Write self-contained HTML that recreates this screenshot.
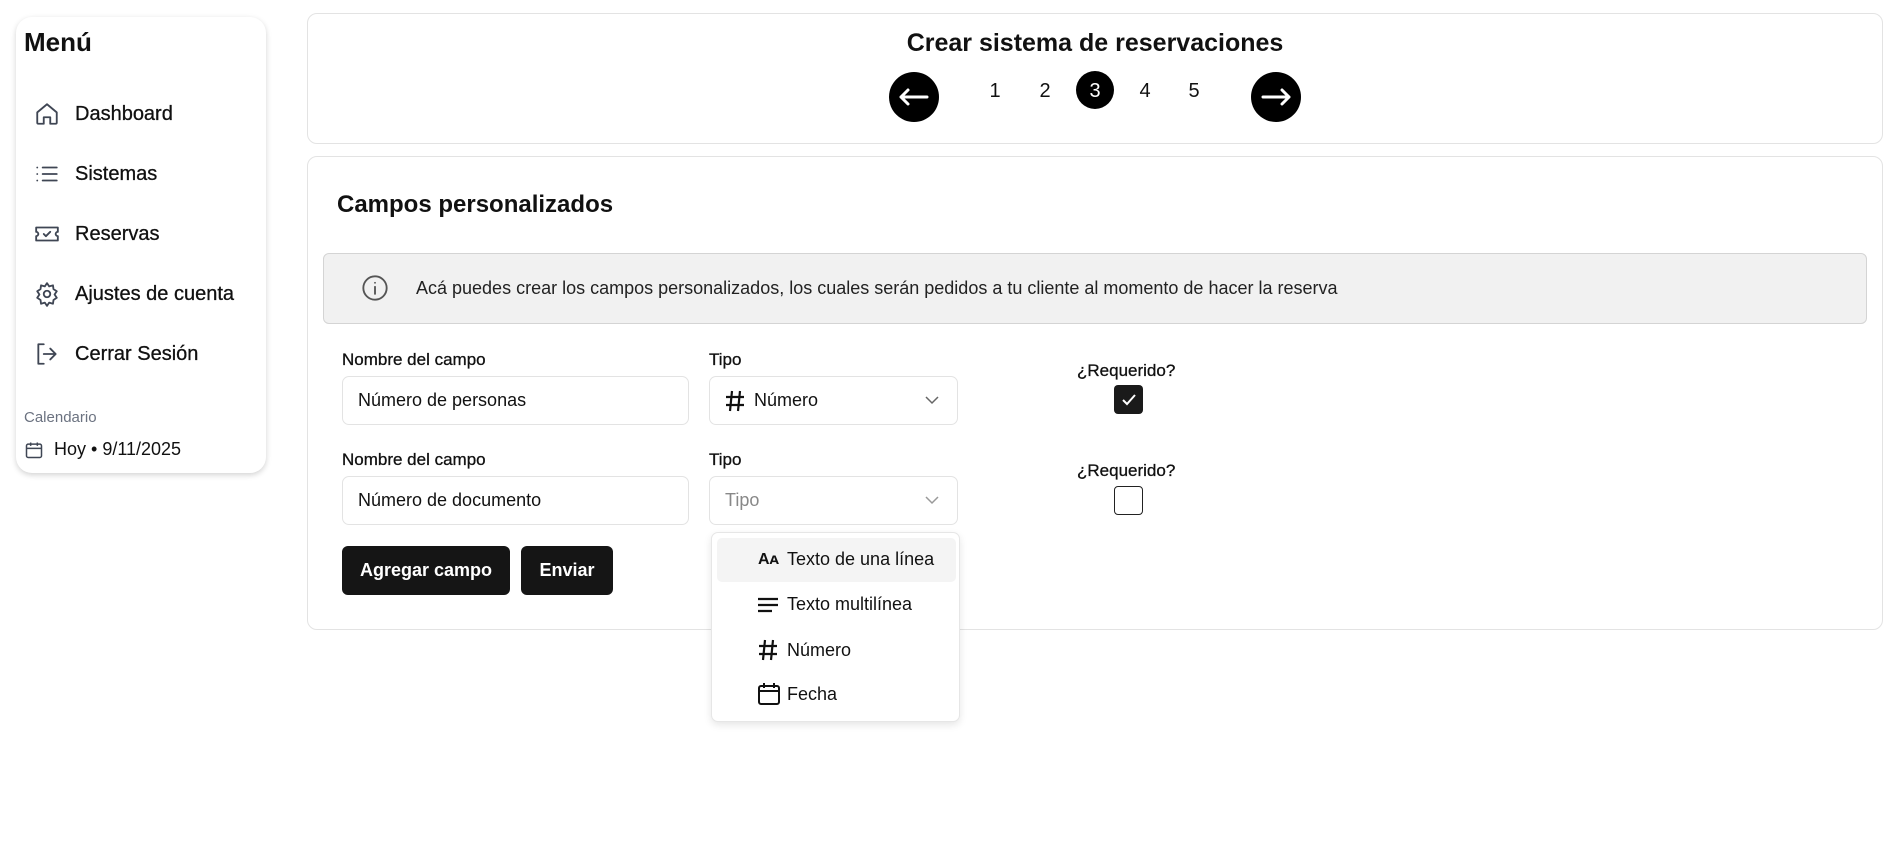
<!DOCTYPE html>
<html><head><meta charset="utf-8"><style>
*{box-sizing:border-box;margin:0;padding:0}
body{width:1895px;height:842px;background:#fff;font-family:"Liberation Sans",sans-serif;color:#111;position:relative;overflow:hidden}
.abs{position:absolute}
.side{left:16px;top:17px;width:250px;height:456px;border-radius:16px;background:#fff;box-shadow:0 2px 6px rgba(0,0,0,.18)}
.item{position:absolute;left:18px;display:flex;align-items:center;font-size:20px;color:#111;-webkit-text-stroke:0.3px #111}
.item svg{width:26px;height:26px;margin-right:15px;stroke:#3f4654;fill:none;stroke-width:1.7;stroke-linecap:round;stroke-linejoin:round}
.card{border:1px solid #e3e3e3;border-radius:10px;background:#fff}
.lbl{font-size:17px;color:#111;-webkit-text-stroke:0.3px #111}
.inp{border:1px solid #e3e3e3;border-radius:7px;font-size:18px;display:flex;align-items:center;padding-left:15px}
.chev{position:absolute;right:18px;top:50%;margin-top:-5px}
.btn{background:#151515;color:#fff;border-radius:6px;font-size:18px;font-weight:bold;display:flex;align-items:center;justify-content:center}
.dd{font-size:18px;display:flex;align-items:center;position:absolute;left:46px}
.num{position:absolute;top:80px;font-size:20px;width:20px;text-align:center}
</style></head><body>
<div class="abs side">
 <div class="abs" style="left:8px;top:10px;font-size:26px;font-weight:bold">Menú</div>
 <div class="item" style="top:84px"><svg viewBox="0 0 24 24"><path d="M3 10.5L12 3l9 7.5V20a1 1 0 0 1-1 1h-5v-6h-6v6H4a1 1 0 0 1-1-1z"/></svg>Dashboard</div>
 <div class="item" style="top:144px"><svg viewBox="0 0 24 24"><path d="M8 6h13M8 12h13M8 18h13M3 6h.01M3 12h.01M3 18h.01"/></svg>Sistemas</div>
 <div class="item" style="top:204px"><svg viewBox="0 0 24 24"><path d="M2 6h20v4a2 2 0 0 0 0 4v4H2v-4a2 2 0 0 0 0-4z"/><path d="M9 12l2 2 4-4"/></svg>Reservas</div>
 <div class="item" style="top:264px"><svg viewBox="0 0 24 24"><circle cx="12" cy="12" r="3"/><path d="M12 2l2 3 3.5-1 .5 3.5 3 2-2 3 2 3-3 2-.5 3.5-3.5-1-2 3-2-3-3.5 1-.5-3.5-3-2 2-3-2-3 3-2 .5-3.5 3.5 1z"/></svg>Ajustes de cuenta</div>
 <div class="item" style="top:324px"><svg viewBox="0 0 24 24"><path d="M9 3H4v18h5M15 7l5 5-5 5M20 12H9"/></svg>Cerrar Sesión</div>
 <div class="abs" style="left:8px;top:392px;font-size:15px;color:#6b7280">Calendario</div>
 <div class="abs" style="left:8px;top:422px;font-size:18px;display:flex;align-items:center"><svg width="20" height="20" viewBox="0 0 24 24" fill="none" stroke="#3f4654" stroke-width="1.8" style="margin-right:10px"><rect x="3" y="5" width="18" height="16" rx="2"/><path d="M3 10h18M8 3v4M16 3v4"/></svg>Hoy • 9/11/2025</div>
</div>

<div class="abs card" style="left:307px;top:13px;width:1576px;height:131px">
 <div class="abs" style="left:0;right:0;top:15px;text-align:center;font-size:25px;font-weight:bold">Crear sistema de reservaciones</div>
</div>
<div class="abs" style="left:889px;top:72px;width:50px;height:50px;border-radius:50%;background:#000"><svg width="50" height="50" viewBox="0 0 50 50" fill="none" stroke="#fff" stroke-width="3" stroke-linecap="round" stroke-linejoin="round"><path d="M12 25h26M19 18l-7 7 7 7"/></svg></div>
<div class="abs" style="left:1251px;top:72px;width:50px;height:50px;border-radius:50%;background:#000"><svg width="50" height="50" viewBox="0 0 50 50" fill="none" stroke="#fff" stroke-width="3" stroke-linecap="round" stroke-linejoin="round"><path d="M12 25h26M31 18l7 7-7 7"/></svg></div>
<div class="abs" style="left:1076px;top:71px;width:38px;height:38px;border-radius:50%;background:#000"></div>
<div class="num" style="left:985px">1</div>
<div class="num" style="left:1035px">2</div>
<div class="num" style="left:1085px;color:#fff">3</div>
<div class="num" style="left:1135px">4</div>
<div class="num" style="left:1184px">5</div>

<div class="abs card" style="left:307px;top:156px;width:1576px;height:474px"></div>
<div class="abs" style="left:337px;top:191px;font-size:24px;font-weight:bold">Campos personalizados</div>
<div class="abs" style="left:323px;top:253px;width:1544px;height:71px;background:#f1f1f1;border:1px solid #d4d4d4;border-radius:6px"></div>
<svg class="abs" style="left:361px;top:274px" width="28" height="28" viewBox="0 0 24 24" fill="none" stroke="#555" stroke-width="1.6" stroke-linecap="round"><circle cx="12" cy="12" r="10"/><path d="M12 11v6M12 7.5h.01"/></svg>
<div class="abs" style="left:416px;top:278px;font-size:18px;color:#222">Acá puedes crear los campos personalizados, los cuales serán pedidos a tu cliente al momento de hacer la reserva</div>

<div class="abs lbl" style="left:342px;top:350px">Nombre del campo</div>
<div class="abs inp" style="left:342px;top:376px;width:347px;height:49px">Número de personas</div>
<div class="abs lbl" style="left:709px;top:350px">Tipo</div>
<div class="abs inp" style="left:709px;top:376px;width:249px;height:49px"><svg width="20" height="22" viewBox="0 0 20 22" stroke="#111" stroke-width="2.2" style="margin-right:9px"><path d="M7 1L5 21M15 1l-2 20M1 7h18M1 15h18"/></svg>Número<svg class="chev" width="14" height="9" viewBox="0 0 14 9" fill="none" stroke="#666" stroke-width="1.5"><path d="M1 1l6 6 6-6"/></svg></div>
<div class="abs lbl" style="left:1077px;top:361px">¿Requerido?</div>
<div class="abs" style="left:1114px;top:385px;width:29px;height:29px;border-radius:4px;background:#1a1a1a"><svg width="29" height="29" viewBox="0 0 29 29" fill="none" stroke="#fff" stroke-width="2"><path d="M9 15l4 4 8-9"/></svg></div>

<div class="abs lbl" style="left:342px;top:450px">Nombre del campo</div>
<div class="abs inp" style="left:342px;top:476px;width:347px;height:49px">Número de documento</div>
<div class="abs lbl" style="left:709px;top:450px">Tipo</div>
<div class="abs inp" style="left:709px;top:476px;width:249px;height:49px;color:#888">Tipo<svg class="chev" width="14" height="9" viewBox="0 0 14 9" fill="none" stroke="#999" stroke-width="1.5"><path d="M1 1l6 6 6-6"/></svg></div>
<div class="abs lbl" style="left:1077px;top:461px">¿Requerido?</div>
<div class="abs" style="left:1114px;top:486px;width:29px;height:29px;border-radius:4px;border:1.5px solid #222"></div>

<div class="abs btn" style="left:342px;top:546px;width:168px;height:49px">Agregar campo</div>
<div class="abs btn" style="left:521px;top:546px;width:92px;height:49px">Enviar</div>

<div class="abs" style="left:711px;top:532px;width:249px;height:190px;background:#fff;border:1px solid #e6e6e6;border-radius:7px;box-shadow:0 3px 8px rgba(0,0,0,.1)">
 <div class="abs" style="left:5px;top:5px;width:239px;height:44px;background:#f4f4f4;border-radius:5px"></div>
 <div class="dd" style="top:16px"><span style="font-weight:bold;font-size:16px;width:29px">Aᴀ</span>Texto de una línea</div>
 <div class="dd" style="top:61px"><svg width="22" height="20" viewBox="0 0 22 20" stroke="#111" stroke-width="2.2" style="margin-right:7px"><path d="M0 4h20M0 10h20M0 16h14"/></svg>Texto multilínea</div>
 <div class="dd" style="top:106px"><svg width="20" height="22" viewBox="0 0 20 22" stroke="#111" stroke-width="2.2" style="margin-right:9px"><path d="M7 1L5 21M15 1l-2 20M1 7h18M1 15h18"/></svg>Número</div>
 <div class="dd" style="top:150px"><svg width="22" height="22" viewBox="0 0 22 22" fill="none" stroke="#111" stroke-width="2" style="margin-right:7px"><rect x="1" y="3" width="20" height="18" rx="2"/><path d="M1 8h20M6 0v5M16 0v5"/></svg>Fecha</div>
</div>
</body></html>
